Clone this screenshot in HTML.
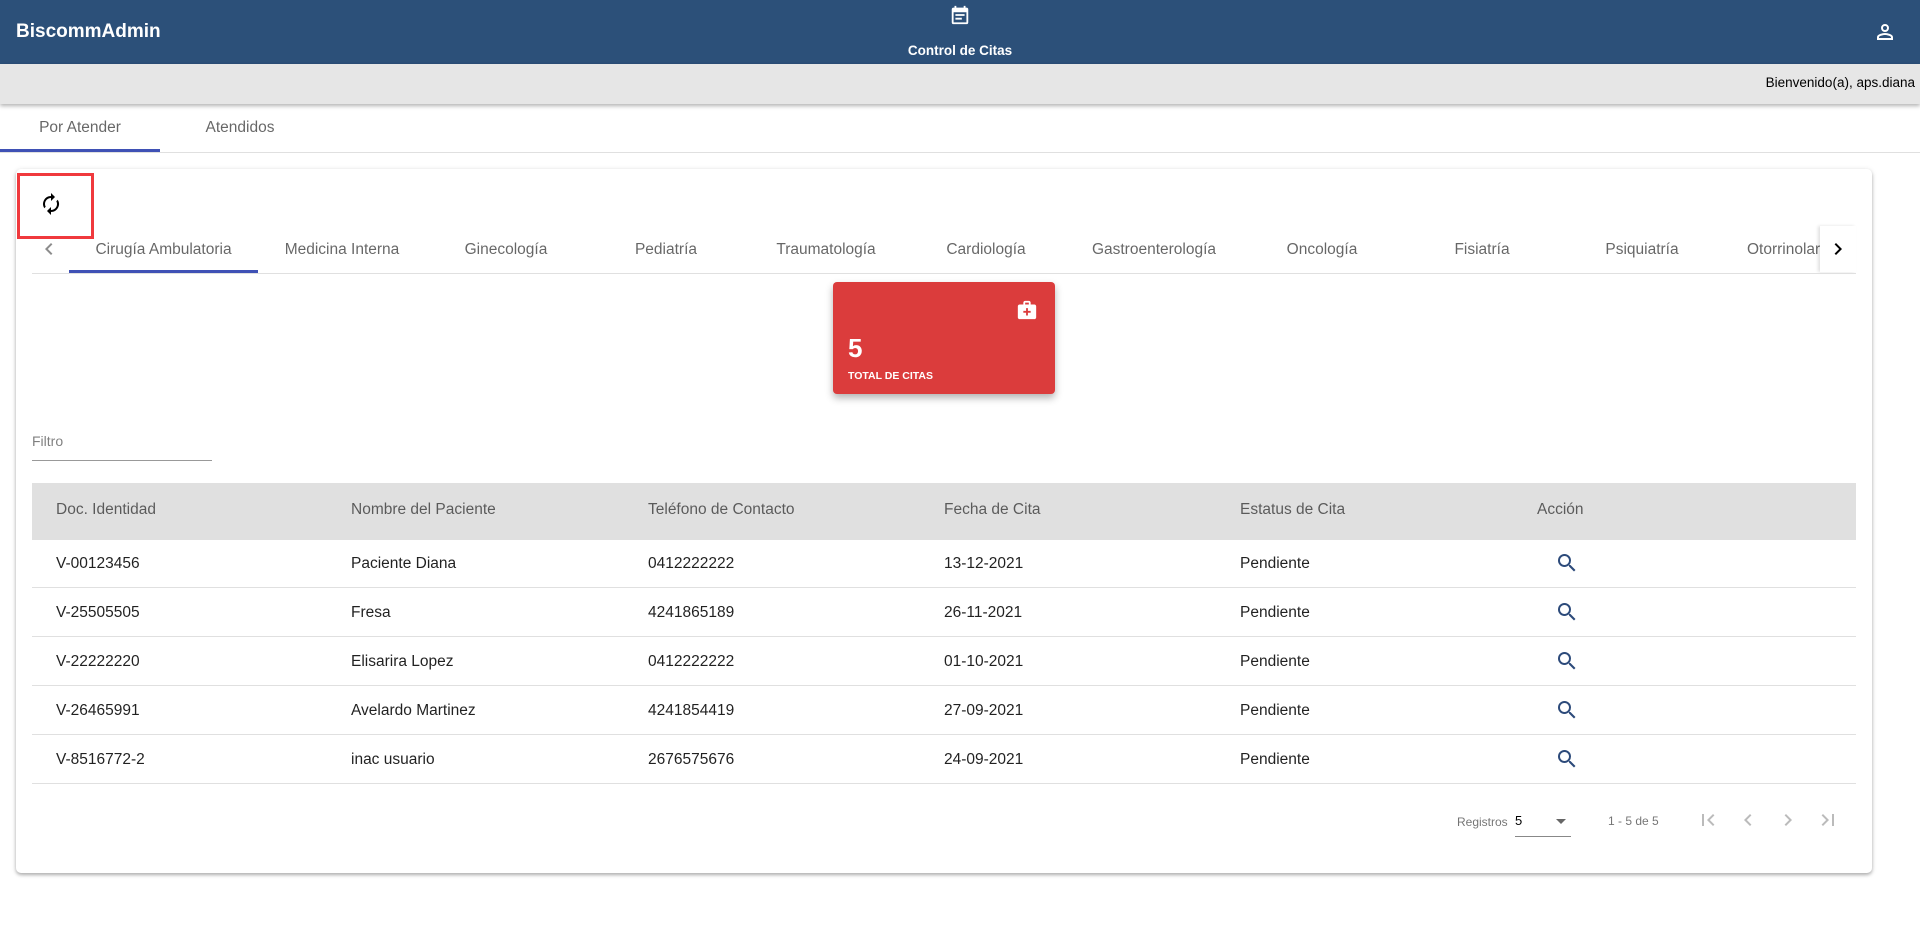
<!DOCTYPE html>
<html><head><meta charset="utf-8"><style>
*{box-sizing:border-box;margin:0;padding:0}
body{width:1920px;height:937px;background:#fff;font-family:"Liberation Sans",Arial,sans-serif;position:relative;overflow:hidden;color:rgba(0,0,0,.87)}
.abs{position:absolute}
.hdr{left:0;top:0;width:1920px;height:64px;background:#2c5079}
.gbar{left:0;top:64px;width:1920px;height:40px;background:#e6e6e6;box-shadow:0 2px 4px rgba(0,0,0,.3)}
.card{left:16px;top:169px;width:1856px;height:704px;background:#fff;border-radius:5px;box-shadow:0 2px 3px rgba(0,0,0,.25),0 1px 6px rgba(0,0,0,.12)}
.tab{top:241px;font-size:15.5px;color:rgba(0,0,0,.6);white-space:nowrap}
.th{top:501px;font-size:15.5px;color:rgba(0,0,0,.6)}
.td{font-size:15.5px;color:rgba(0,0,0,.87)}
.line{height:1px;background:#e0e0e0}
</style></head><body>
<div class="abs hdr"></div>
<div class="abs" style="left:16px;top:21px;color:#fff;font-weight:bold;font-size:19px">BiscommAdmin</div>
<svg class="abs" style="left:949px;top:4px" width="22" height="22" viewBox="0 0 24 24"><path fill="#fff" d="M19 4h-1V2h-2v2H8V2H6v2H5a2 2 0 0 0-2 2v14a2 2 0 0 0 2 2h14a2 2 0 0 0 2-2V6a2 2 0 0 0-2-2zm0 16H5V9h14v11zM7 11h10v2H7zm0 4h7v2H7z"/></svg>
<div class="abs" style="left:880px;top:43px;width:160px;text-align:center;color:#fff;font-weight:bold;font-size:13.5px">Control de Citas</div>
<svg class="abs" style="left:1873px;top:20px" width="24" height="24" viewBox="0 0 24 24"><path fill="#fff" d="M12 6a2 2 0 1 1 0 4 2 2 0 0 1 0-4m0 9c2.7 0 5.8 1.29 6 2v1H6v-.99c.2-.72 3.3-2.01 6-2.01M12 4a4 4 0 1 0 0 8 4 4 0 0 0 0-8zm0 9c-2.670 0-8 1.34-8 4v3h16v-3c0-2.66-5.33-4-8-4z"/></svg>
<div class="abs gbar"></div>
<div class="abs" style="right:5px;top:75px;font-size:13.5px;color:#000">Bienvenido(a), aps.diana</div>

<div class="abs" style="left:0;top:119px;width:160px;text-align:center;font-size:15.5px;color:rgba(0,0,0,.6)">Por Atender</div>
<div class="abs" style="left:160px;top:119px;width:160px;text-align:center;font-size:15.5px;color:rgba(0,0,0,.6)">Atendidos</div>
<div class="abs line" style="left:0;top:152px;width:1920px"></div>
<div class="abs" style="left:0;top:149px;width:160px;height:3px;background:#3f51b5"></div>

<div class="abs card"></div>
<div class="abs" style="left:17px;top:173px;width:77px;height:66px;border:3px solid #f0393d"></div>
<svg class="abs" style="left:39px;top:192px" width="24" height="24" viewBox="0 0 24 24"><path fill="#000" d="M12 6v3l4-4-4-4v3a8 8 0 0 0-6.76 12.26l1.46-1.46A5.87 5.87 0 0 1 6 12c0-3.31 2.69-6 6-6zm6.76 1.74L17.3 9.2c.44.84.7 1.79.7 2.8 0 3.31-2.69 6-6 6v-3l-4 4 4 4v-3a8 8 0 0 0 6.76-12.26z"/></svg>

<svg class="abs" style="left:37px;top:237px" width="24" height="24" viewBox="0 0 24 24"><path fill="rgba(0,0,0,.45)" d="M15.41 7.41L14 6l-6 6 6 6 1.41-1.41L10.83 12z"/></svg>
<div class="abs tab" style="left:69px;width:189px;text-align:center">Cirugía Ambulatoria</div>
<div class="abs tab" style="left:258px;width:168px;text-align:center">Medicina Interna</div>
<div class="abs tab" style="left:426px;width:160px;text-align:center">Ginecología</div>
<div class="abs tab" style="left:586px;width:160px;text-align:center">Pediatría</div>
<div class="abs tab" style="left:746px;width:160px;text-align:center">Traumatología</div>
<div class="abs tab" style="left:906px;width:160px;text-align:center">Cardiología</div>
<div class="abs tab" style="left:1066px;width:176px;text-align:center">Gastroenterología</div>
<div class="abs tab" style="left:1242px;width:160px;text-align:center">Oncología</div>
<div class="abs tab" style="left:1402px;width:160px;text-align:center">Fisiatría</div>
<div class="abs tab" style="left:1562px;width:160px;text-align:center">Psiquiatría</div>
<div class="abs" style="left:1722px;top:226px;width:98px;height:46px;overflow:hidden"><div class="tab" style="position:absolute;left:25px;top:15px">Otorrinolaringología</div></div>
<div class="abs" style="left:1820px;top:226px;width:36px;height:46px;background:#fff;box-shadow:-2px 0 3px rgba(0,0,0,.12)"></div>
<svg class="abs" style="left:1826px;top:237px" width="24" height="24" viewBox="0 0 24 24"><path fill="#000" d="M10 6L8.59 7.41 13.17 12l-4.58 4.59L10 18l6-6z"/></svg>
<div class="abs line" style="left:32px;top:273px;width:1824px"></div>
<div class="abs" style="left:69px;top:270px;width:189px;height:3px;background:#3f51b5"></div>

<div class="abs" style="left:833px;top:282px;width:222px;height:112px;background:#db3c3c;border-radius:4px;box-shadow:0 4px 8px rgba(0,0,0,.3)"></div>
<svg class="abs" style="left:1016px;top:299px" width="22" height="22" viewBox="0 0 24 24"><path fill="#fff" d="M20 6h-4V4c0-1.1-.9-2-2-2h-4c-1.1 0-2 .9-2 2v2H4c-1.1 0-2 .9-2 2v12c0 1.1.9 2 2 2h16c1.1 0 2-.9 2-2V8c0-1.1-.9-2-2-2zM10 4h4v2h-4V4zm6 11h-3v3h-2v-3H8v-2h3v-3h2v3h3v2z"/></svg>
<div class="abs" style="left:848px;top:333px;color:#fff;font-weight:bold;font-size:26px">5</div>
<div class="abs" style="left:848px;top:370px;color:#fff;font-weight:bold;font-size:10.5px">TOTAL DE CITAS</div>

<div class="abs" style="left:32px;top:433px;font-size:14px;color:rgba(0,0,0,.5)">Filtro</div>
<div class="abs" style="left:32px;top:460px;width:180px;height:1px;background:#999"></div>

<div class="abs" style="left:32px;top:483px;width:1824px;height:57px;background:#e0e0e0"></div>
<div class="abs th" style="left:56px">Doc. Identidad</div>
<div class="abs th" style="left:351px">Nombre del Paciente</div>
<div class="abs th" style="left:648px">Teléfono de Contacto</div>
<div class="abs th" style="left:944px">Fecha de Cita</div>
<div class="abs th" style="left:1240px">Estatus de Cita</div>
<div class="abs th" style="left:1537px">Acción</div>

<div class="abs" style="left:0;top:539px;width:1920px">
<div style="position:relative;height:49px"><span class="abs td" style="left:56px;top:16px">V-00123456</span><span class="abs td" style="left:351px;top:16px">Paciente Diana</span><span class="abs td" style="left:648px;top:16px">0412222222</span><span class="abs td" style="left:944px;top:16px">13-12-2021</span><span class="abs td" style="left:1240px;top:16px">Pendiente</span><div class="abs line" style="left:32px;top:48px;width:1824px"></div></div>
<div style="position:relative;height:49px"><span class="abs td" style="left:56px;top:16px">V-25505505</span><span class="abs td" style="left:351px;top:16px">Fresa</span><span class="abs td" style="left:648px;top:16px">4241865189</span><span class="abs td" style="left:944px;top:16px">26-11-2021</span><span class="abs td" style="left:1240px;top:16px">Pendiente</span><div class="abs line" style="left:32px;top:48px;width:1824px"></div></div>
<div style="position:relative;height:49px"><span class="abs td" style="left:56px;top:16px">V-22222220</span><span class="abs td" style="left:351px;top:16px">Elisarira Lopez</span><span class="abs td" style="left:648px;top:16px">0412222222</span><span class="abs td" style="left:944px;top:16px">01-10-2021</span><span class="abs td" style="left:1240px;top:16px">Pendiente</span><div class="abs line" style="left:32px;top:48px;width:1824px"></div></div>
<div style="position:relative;height:49px"><span class="abs td" style="left:56px;top:16px">V-26465991</span><span class="abs td" style="left:351px;top:16px">Avelardo Martinez</span><span class="abs td" style="left:648px;top:16px">4241854419</span><span class="abs td" style="left:944px;top:16px">27-09-2021</span><span class="abs td" style="left:1240px;top:16px">Pendiente</span><div class="abs line" style="left:32px;top:48px;width:1824px"></div></div>
<div style="position:relative;height:49px"><span class="abs td" style="left:56px;top:16px">V-8516772-2</span><span class="abs td" style="left:351px;top:16px">inac usuario</span><span class="abs td" style="left:648px;top:16px">2676575676</span><span class="abs td" style="left:944px;top:16px">24-09-2021</span><span class="abs td" style="left:1240px;top:16px">Pendiente</span><div class="abs line" style="left:32px;top:48px;width:1824px"></div></div>
</div>
<svg class="abs" style="left:1555px;top:551px" width="24" height="24" viewBox="0 0 24 24"><path fill="#2c4a7a" d="M15.5 14h-.79l-.28-.27A6.47 6.47 0 0 0 16 9.5 6.5 6.5 0 1 0 9.5 16c1.61 0 3.09-.59 4.23-1.57l.27.28v.79l5 4.99L20.49 19l-4.99-5zm-6 0C7.01 14 5 11.99 5 9.5S7.01 5 9.5 5 14 7.01 14 9.5 11.99 14 9.5 14z"/></svg>
<svg class="abs" style="left:1555px;top:600px" width="24" height="24" viewBox="0 0 24 24"><path fill="#2c4a7a" d="M15.5 14h-.79l-.28-.27A6.47 6.47 0 0 0 16 9.5 6.5 6.5 0 1 0 9.5 16c1.61 0 3.09-.59 4.23-1.57l.27.28v.79l5 4.99L20.49 19l-4.99-5zm-6 0C7.01 14 5 11.99 5 9.5S7.01 5 9.5 5 14 7.01 14 9.5 11.99 14 9.5 14z"/></svg>
<svg class="abs" style="left:1555px;top:649px" width="24" height="24" viewBox="0 0 24 24"><path fill="#2c4a7a" d="M15.5 14h-.79l-.28-.27A6.47 6.47 0 0 0 16 9.5 6.5 6.5 0 1 0 9.5 16c1.61 0 3.09-.59 4.23-1.57l.27.28v.79l5 4.99L20.49 19l-4.99-5zm-6 0C7.01 14 5 11.99 5 9.5S7.01 5 9.5 5 14 7.01 14 9.5 11.99 14 9.5 14z"/></svg>
<svg class="abs" style="left:1555px;top:698px" width="24" height="24" viewBox="0 0 24 24"><path fill="#2c4a7a" d="M15.5 14h-.79l-.28-.27A6.47 6.47 0 0 0 16 9.5 6.5 6.5 0 1 0 9.5 16c1.61 0 3.09-.59 4.23-1.57l.27.28v.79l5 4.99L20.49 19l-4.99-5zm-6 0C7.01 14 5 11.99 5 9.5S7.01 5 9.5 5 14 7.01 14 9.5 11.99 14 9.5 14z"/></svg>
<svg class="abs" style="left:1555px;top:747px" width="24" height="24" viewBox="0 0 24 24"><path fill="#2c4a7a" d="M15.5 14h-.79l-.28-.27A6.47 6.47 0 0 0 16 9.5 6.5 6.5 0 1 0 9.5 16c1.61 0 3.09-.59 4.23-1.57l.27.28v.79l5 4.99L20.49 19l-4.99-5zm-6 0C7.01 14 5 11.99 5 9.5S7.01 5 9.5 5 14 7.01 14 9.5 11.99 14 9.5 14z"/></svg>

<div class="abs" style="left:1457px;top:815px;font-size:12px;color:rgba(0,0,0,.55)">Registros</div>
<div class="abs" style="left:1515px;top:813px;font-size:13px;color:#000">5</div>
<div class="abs" style="left:1556px;top:819px;width:0;height:0;border-left:5px solid transparent;border-right:5px solid transparent;border-top:5px solid #666"></div>
<div class="abs" style="left:1515px;top:836px;width:56px;height:1px;background:#888"></div>
<div class="abs" style="left:1608px;top:814px;font-size:12px;color:rgba(0,0,0,.55)">1 - 5 de 5</div>
<svg class="abs" style="left:1696px;top:808px" width="24" height="24" viewBox="0 0 24 24"><path fill="#bbb" d="M18.41 16.59L13.82 12l4.59-4.59L17 6l-6 6 6 6zM6 6h2v12H6z"/></svg>
<svg class="abs" style="left:1736px;top:808px" width="24" height="24" viewBox="0 0 24 24"><path fill="#bbb" d="M15.41 7.41L14 6l-6 6 6 6 1.41-1.41L10.83 12z"/></svg>
<svg class="abs" style="left:1776px;top:808px" width="24" height="24" viewBox="0 0 24 24"><path fill="#bbb" d="M10 6L8.59 7.41 13.17 12l-4.58 4.59L10 18l6-6z"/></svg>
<svg class="abs" style="left:1816px;top:808px" width="24" height="24" viewBox="0 0 24 24"><path fill="#bbb" d="M5.59 7.41L10.18 12l-4.59 4.59L7 18l6-6-6-6zM16 6h2v12h-2z"/></svg>
</body></html>
